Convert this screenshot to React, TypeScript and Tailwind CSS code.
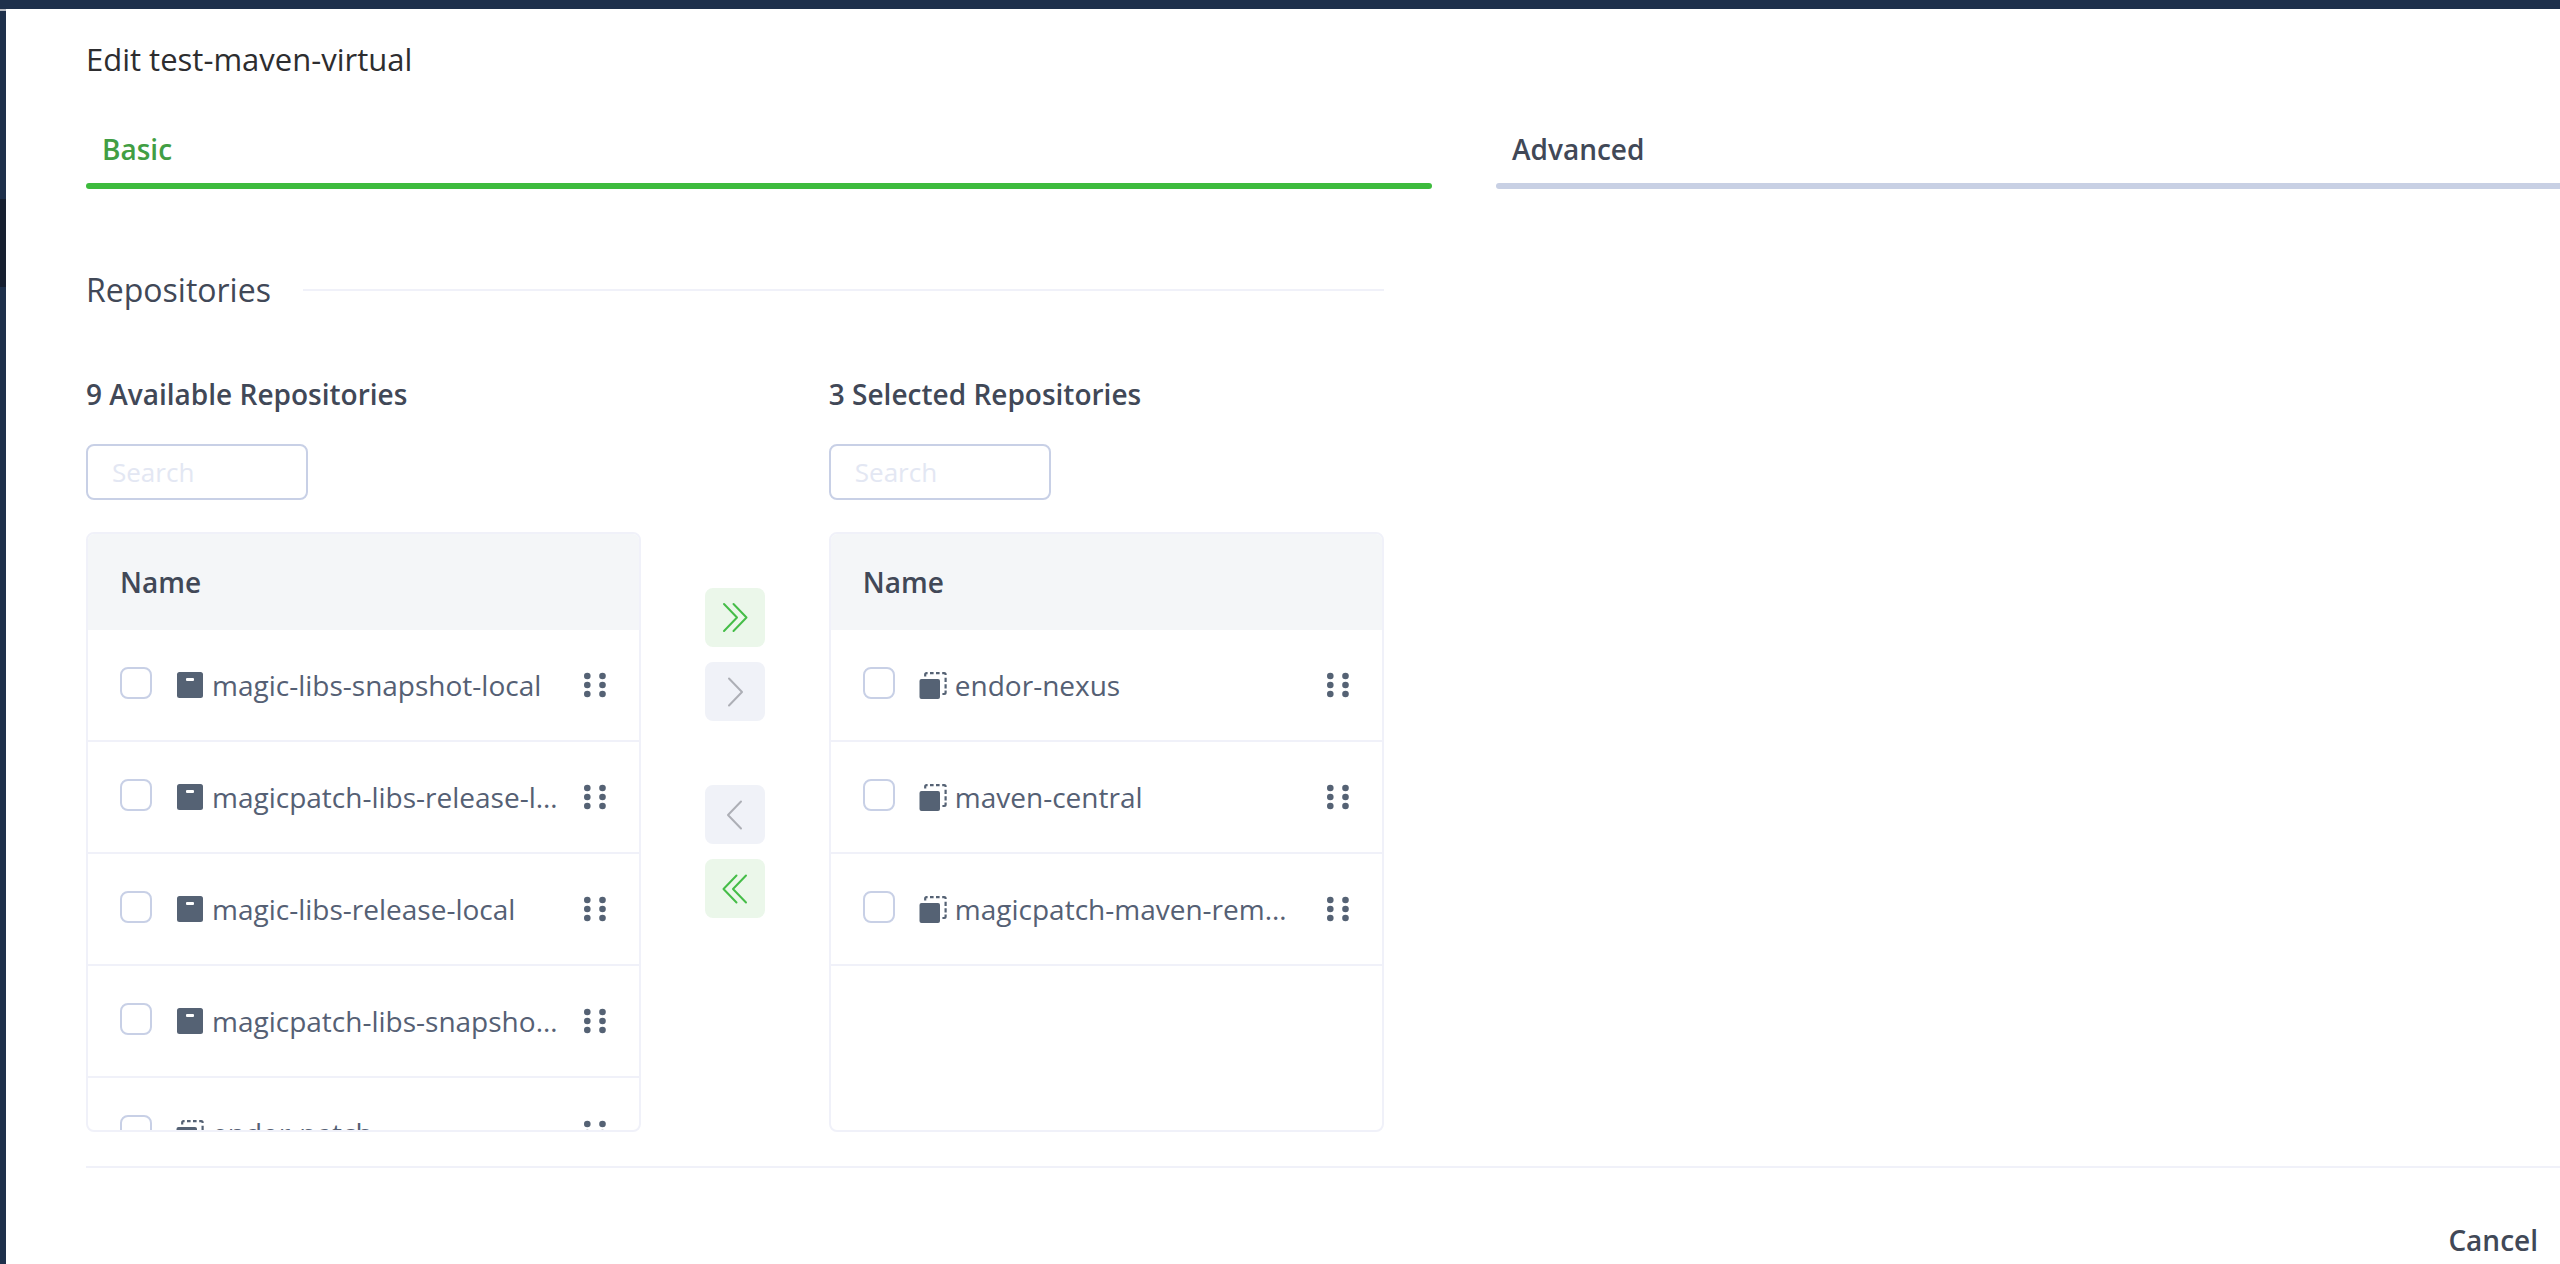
import { useState } from "react";

type RepoType = "local" | "remote";

interface Repo {
  name: string;
  type: RepoType;
}

const availableRepos: Repo[] = [
  { name: "magic-libs-snapshot-local", type: "local" },
  { name: "magicpatch-libs-release-local", type: "local" },
  { name: "magic-libs-release-local", type: "local" },
  { name: "magicpatch-libs-snapshot-local", type: "local" },
  { name: "endor-patch", type: "remote" },
];

const selectedRepos: Repo[] = [
  { name: "endor-nexus", type: "remote" },
  { name: "maven-central", type: "remote" },
  { name: "magicpatch-maven-remote", type: "remote" },
];

function RepoIcon({ type }: { type: RepoType }) {
  if (type === "local") {
    return (
      <svg viewBox="0 0 28 28" className="size-7 shrink-0" aria-hidden="true">
        <rect x="1" y="1" width="26" height="26" rx="2.5" fill="#556274" />
        <rect x="10" y="7" width="8" height="3" rx="1" fill="#fff" />
      </svg>
    );
  }
  return (
    <svg viewBox="0 0 28 28" className="size-7 shrink-0" aria-hidden="true">
      <rect x="0.5" y="8" width="20.5" height="20" rx="2" fill="#556274" />
      <g fill="none" stroke="#556274" strokeWidth="2.2">
        <path d="M6.2 5.4V3.6Q6.2 2.2 7.6 2.2H8.6" />
        <path d="M11 2.2H14.6M17 2.2H20.6" />
        <path d="M23.2 2.2H25.2Q26.6 2.2 26.6 3.6V4" />
        <path d="M26.6 6.8V11M26.6 13.2V17.4" />
        <path d="M26.6 19.6V21.6Q26.6 23 25.2 23H23.4" />
      </g>
    </svg>
  );
}

function DragHandle() {
  return (
    <svg viewBox="0 0 22 26" className="h-[26px] w-[22px]" fill="#556274" aria-hidden="true">
      {[4, 13, 22].map((cy) => (
        <g key={cy}>
          <circle cx="3.3" cy={cy} r="3.3" />
          <circle cx="18.5" cy={cy} r="3.3" />
        </g>
      ))}
    </svg>
  );
}

function RepoList({ id, title, repos }: { id: string; title: string; repos: Repo[] }) {
  return (
    <div className="min-w-0 flex-1">
      <h3 className="text-[28px] leading-10 font-semibold text-[#414857]">{title}</h3>
      <input
        type="text"
        aria-label={`Search ${title}`}
        placeholder="Search"
        className="mt-[30px] block h-14 w-[222px] rounded-lg border-2 border-[#c8d0e6] px-6 text-[26px] text-[#414857] placeholder:text-[#e3e7f3]"
      />
      <div className="mt-8 h-[600px] overflow-hidden rounded-lg border-2 border-[#f0f1f9]">
        <table className="w-full table-fixed border-separate border-spacing-0 text-[28px] leading-10 text-[#556074]">
          <colgroup>
            <col className="w-[88px]" />
            <col />
            <col className="w-20" />
          </colgroup>
          <thead>
            <tr className="h-24 bg-[#f4f6f8]">
              <th colSpan={3} scope="col" className="pl-8 text-left font-semibold text-[#414857]">
                Name
              </th>
            </tr>
          </thead>
          <tbody>
            {repos.map((repo, i) => (
              <tr key={repo.name} className="h-28">
                <td className="border-b-2 border-[#f0f1f9] pb-1 pl-8 align-middle">
                  <input
                    id={`${id}-${i}`}
                    type="checkbox"
                    className="block size-8 appearance-none rounded-lg border-2 border-[#c8d0e6] bg-white checked:bg-[#3dbb3d]"
                  />
                </td>
                <td className="border-b-2 border-[#f0f1f9] align-middle">
                  <label htmlFor={`${id}-${i}`} className="flex items-center gap-2">
                    <RepoIcon type={repo.type} />
                    <span className="min-w-0 truncate">{repo.name}</span>
                  </label>
                </td>
                <td className="border-b-2 border-[#f0f1f9] pl-[25px] align-middle">
                  <button type="button" aria-label={`Reorder ${repo.name}`} className="block cursor-grab">
                    <DragHandle />
                  </button>
                </td>
              </tr>
            ))}
          </tbody>
        </table>
      </div>
    </div>
  );
}

function MoveButton({ label, d, disabled }: { label: string; d: string; disabled?: boolean }) {
  return (
    <button
      type="button"
      aria-label={label}
      disabled={disabled}
      className="flex h-[59px] w-[60px] items-center justify-center rounded-lg bg-[#ebf7ea] text-[#45bd48] disabled:bg-[#f0f2f8] disabled:text-[#adafb6]"
    >
      <svg
        viewBox="0 0 32 32"
        className="size-8"
        fill="none"
        stroke="currentColor"
        strokeWidth="2"
        strokeLinecap="round"
        strokeLinejoin="round"
        aria-hidden="true"
      >
        <path d={d} />
      </svg>
    </button>
  );
}

export default function App() {
  const [tab, setTab] = useState("Basic");

  return (
    <div className="flex min-h-screen flex-col overflow-hidden bg-white font-['Open_Sans',sans-serif]">
      <header className="h-[9px] bg-[#1e304b]" />

      <div className="flex flex-1">
        {/* Side navigation */}
        <nav className="w-1.5 shrink-0 border-t-2 border-[#b4b8c0] bg-[#1e304b] pt-[188px]">
          <div className="h-[88px] bg-[#161f30]" />
        </nav>

        <main className="min-w-0 flex-1 pt-7 pl-20">
          <h1 className="text-[31px] leading-[44px] text-[#2d2d2f]">Edit test-maven-virtual</h1>

          {/* Tabs */}
          <div role="tablist" className="mt-12 grid grid-cols-[1346fr_1064fr] gap-16">
            {["Basic", "Advanced"].map((name) => (
              <button
                key={name}
                type="button"
                role="tab"
                aria-selected={tab === name}
                onClick={() => setTab(name)}
                className="group text-left text-[28px] leading-10 font-semibold text-[#414857] aria-selected:text-[#419e43]"
              >
                <span className="block pb-3.5 pl-4">{name}</span>
                <span className="block h-1.5 rounded-full bg-[#c8d0e4] group-last:rounded-r-none group-aria-selected:bg-[#3dbb3d]" />
              </button>
            ))}
          </div>

          {/* Repositories */}
          <section className="mt-[79px] w-[52.45%]">
            <div className="flex items-center gap-8">
              <h2 className="text-[32px] leading-[44px] text-[#414857]">Repositories</h2>
              <div className="h-0.5 flex-1 bg-[#f0f1f9]" />
            </div>

            <div className="mt-[62px] flex gap-16">
              <RepoList id="available" title="9 Available Repositories" repos={availableRepos} />

              <div className="flex flex-col gap-16 pt-[214px]">
                <div className="flex flex-col gap-[15px]">
                  <MoveButton label="Select all" d="M5 2L18 15.5L5 29M14.5 2L27.5 15.5L14.5 29" />
                  <MoveButton label="Select" d="M10 2.5L23 16L10 29.5" disabled />
                </div>
                <div className="flex flex-col gap-[15px]">
                  <MoveButton label="Remove" d="M22 2.5L9 16L22 29.5" disabled />
                  <MoveButton label="Remove all" d="M17.5 2.5L4.5 16L17.5 29.5M27 2.5L14 16L27 29.5" />
                </div>
              </div>

              <RepoList id="selected" title="3 Selected Repositories" repos={selectedRepos} />
            </div>
          </section>

          {/* Actions */}
          <footer className="mt-[34px] flex justify-end border-t-2 border-[#f0f1f9] pt-[52px] pr-[22px]">
            <button type="button" className="text-[28px] leading-10 font-semibold text-[#414857]">
              Cancel
            </button>
          </footer>
        </main>
      </div>
    </div>
  );
}
